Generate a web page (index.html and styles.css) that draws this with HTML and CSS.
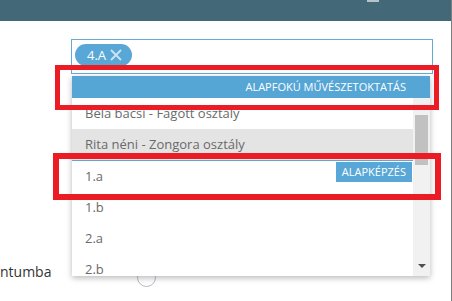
FILE: index.html
```html
<!DOCTYPE html>
<html lang="hu">
<head>
  <meta charset="UTF-8" />
  <meta name="viewport" content="width=device-width, initial-scale=1.0"/>
  <title>Osztály választás</title>
  <link rel="stylesheet" href="styles.css">
</head>
<body>
  <div class="page">
    <div class="topbar">
      <span class="tb-icon"></span>
    </div>
    <div class="modal-body">
      <div class="field">
        <div class="select-box">
          <span class="tag">4.A
            <svg class="tag-x" width="12" height="12" viewBox="0 0 12 12">
              <path d="M1 1L11 11M11 1L1 11" stroke="#cfe3f0" stroke-width="1.8" fill="none"/>
            </svg>
          </span>
        </div>
        <div class="dropdown">
          <div class="group-head">Alapfokú művészetoktatás</div>
          <div class="list">
            <div class="items">
              <div class="item">Béla bácsi - Fagott osztály</div>
              <div class="item hover">Rita néni - Zongora osztály</div>
              <div class="group">
                <span class="group-label">Alapképzés</span>
                <div class="item">1.a</div>
                <div class="item">1.b</div>
                <div class="item">2.a</div>
                <div class="item">2.b</div>
              </div>
            </div>
            <div class="scrollbar">
              <span class="arrow-up"></span>
              <span class="thumb"></span>
              <span class="arrow-down"></span>
            </div>
          </div>
        </div>
      </div>
      <div class="row">
        <label class="label">ntumba</label>
        <span class="radio"></span>
      </div>
    </div>
  </div>
  <div class="mark mark-1"></div>
  <div class="mark mark-2"></div>
</body>
</html>
```

FILE: styles.css
```css
* {
  margin: 0;
  padding: 0;
  box-sizing: border-box;
  font-family: 'Open Sans', 'Noto Sans', sans-serif;
}

body {
  background: #fff;
  width: 452px;
  height: 301px;
  overflow: hidden;
}

.page {
  width: 452px;
  height: 301px;
  border-right: 1px solid #7e7e7e;
}

.topbar {
  height: 21px;
  background: #436979;
  display: flex;
  justify-content: flex-end;
  padding-right: 72px;
}

.tb-icon {
  width: 12px;
  height: 2px;
  background: #b4c3ca;
}

.modal-body {
  padding-top: 18px;
}

.field {
  position: relative;
  margin-left: 71px;
  width: 362px;
}

.select-box {
  height: 35px;
  border: 1px solid #64acd6;
  padding: 3px 0 0 3px;
}

.tag {
  display: inline-flex;
  align-items: center;
  height: 22px;
  padding: 0 10px 0 12px;
  border-radius: 11px;
  background: #58a7d6;
  color: #fff;
  font-size: 13px;
}

.tag-x {
  margin-left: 4px;
}

.dropdown {
  position: absolute;
  top: 37px;
  left: 1px;
  width: 358px;
  height: 200px;
  background: #fff;
  box-shadow: 0 2px 6px rgba(0, 0, 0, 0.28);
  z-index: 5;
}

.group-head {
  height: 22px;
  line-height: 22px;
  background: #55a5d5;
  color: #fff;
  font-size: 11px;
  text-transform: uppercase;
  text-align: right;
  padding-right: 24px;
}

.list {
  display: flex;
  height: 178px;
  overflow: hidden;
}

.items {
  flex: 1;
}

.item {
  height: 31px;
  line-height: 31px;
  padding-left: 13px;
  font-size: 13px;
  color: #6a6a6a;
}

.item.hover {
  background: #e4e4e4;
}

.group {
  position: relative;
  border-top: 1px solid #5aa8d6;
}

.group-label {
  position: absolute;
  top: 1px;
  right: 1px;
  height: 20px;
  line-height: 20px;
  padding: 0 6px;
  background: #58a7d6;
  color: #fff;
  font-size: 11px;
  text-transform: uppercase;
}

.scrollbar {
  width: 17px;
  background: #f1f1f1;
  display: flex;
  flex-direction: column;
  align-items: center;
}

.arrow-up {
  margin-top: 7px;
  border-left: 3px solid transparent;
  border-right: 3px solid transparent;
  border-bottom: 3px solid #c8c8c8;
}

.thumb {
  margin-top: 7px;
  width: 13px;
  height: 50px;
  background: #c1c1c1;
}

.arrow-down {
  margin-top: auto;
  margin-bottom: 8px;
  border-left: 4px solid transparent;
  border-right: 4px solid transparent;
  border-top: 4px solid #505050;
}

.row {
  display: flex;
  align-items: flex-start;
  margin-top: 188px;
}

.label {
  width: 137px;
  line-height: 20px;
  font-size: 14px;
  color: #333;
}

.radio {
  margin-top: 6px;
  width: 19px;
  height: 19px;
  border: 1px solid #b3bcc4;
  border-radius: 50%;
}

.mark {
  position: absolute;
  border: 5px solid #ec1c24;
  z-index: 10;
}

.mark-1 {
  left: 55px;
  top: 65px;
  width: 384px;
  height: 45px;
}

.mark-2 {
  left: 53px;
  top: 153px;
  width: 388px;
  height: 47px;
  border-width: 6px;
}
```
